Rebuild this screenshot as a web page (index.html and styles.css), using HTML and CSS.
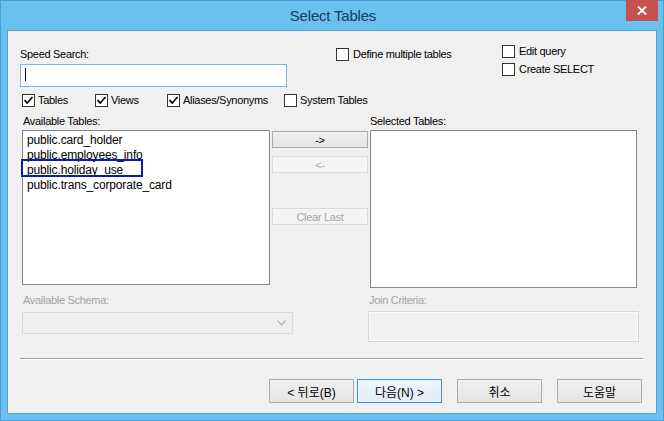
FILE: index.html
```html
<!DOCTYPE html>
<html>
<head>
<meta charset="utf-8">
<title>Select Tables</title>
<link rel="stylesheet" href="styles.css">
</head>
<body>
<div class="window">
  <div class="titlebar">
    <span class="title">Select Tables</span>
    <div class="close">
      <svg width="10" height="9" viewBox="0 0 10 9"><path d="M1 0.5 L9 8.5 M9 0.5 L1 8.5" stroke="#fff" stroke-width="1.8" fill="none"/></svg>
    </div>
  </div>
  <div class="client">
    <div class="top">
      <div class="search">
        <div class="label">Speed Search:</div>
        <div class="textbox"><span class="caret"></span></div>
      </div>
      <div class="define">
        <div class="check"><span class="box"></span><span>Define multiple tables</span></div>
      </div>
      <div class="opts">
        <div class="check"><span class="box"></span><span>Edit query</span></div>
        <div class="check"><span class="box"></span><span>Create SELECT</span></div>
      </div>
    </div>

    <div class="filters">
      <div class="check"><span class="box checked"><svg width="11" height="11" viewBox="0 0 11 11"><path d="M1.5 5.2 L4.2 8 L9.5 2" stroke="#000" stroke-width="1.7" fill="none"/></svg></span><span>Tables</span></div>
      <div class="check"><span class="box checked"><svg width="11" height="11" viewBox="0 0 11 11"><path d="M1.5 5.2 L4.2 8 L9.5 2" stroke="#000" stroke-width="1.7" fill="none"/></svg></span><span>Views</span></div>
      <div class="check"><span class="box checked"><svg width="11" height="11" viewBox="0 0 11 11"><path d="M1.5 5.2 L4.2 8 L9.5 2" stroke="#000" stroke-width="1.7" fill="none"/></svg></span><span>Aliases/Synonyms</span></div>
      <div class="check"><span class="box"></span><span>System Tables</span></div>
    </div>

    <div class="list-heads">
      <div class="label">Available Tables:</div>
      <div class="label">Selected Tables:</div>
    </div>

    <div class="lists">
      <div class="listbox avail">
        <div class="item">public.card_holder</div>
        <div class="item">public.employees_info</div>
        <div class="item">public.holiday_use</div>
        <div class="item">public.trans_corporate_card</div>
        <div class="focus-rect"></div>
      </div>
      <div class="movers">
        <div class="btn small">-&gt;</div>
        <div class="btn small disabled lt">&lt;-</div>
        <div class="btn small disabled clear">Clear Last</div>
      </div>
      <div class="listbox selected"></div>
    </div>

    <div class="lower">
      <div class="schema">
        <div class="label disabled">Available Schema:</div>
        <div class="combo">
          <svg width="9" height="6" viewBox="0 0 9 6"><path d="M0.5 0.5 L4.5 5 L8.5 0.5" stroke="#b4b4b4" stroke-width="1.3" fill="none"/></svg>
        </div>
      </div>
      <div class="join">
        <div class="label disabled">Join Criteria:</div>
        <div class="joinbox"></div>
      </div>
    </div>

    <div class="sep"></div>

    <div class="buttons">
      <div class="btn big">&lt; 뒤로(B)</div>
      <div class="btn big default">다음(N) &gt;</div>
      <div class="btn big cancel">취소</div>
      <div class="btn big help">도움말</div>
    </div>
  </div>
</div>
</body>
</html>
```

FILE: styles.css
```css
* { box-sizing: border-box; }
html, body { margin: 0; padding: 0; background: #6bc1ef; }
body {
  font-family: "Liberation Sans", Arial, "Noto Sans CJK KR", sans-serif;
  font-size: 11px;
  color: #000;
}
.window {
  position: relative;
  width: 664px;
  height: 421px;
  border: 1px solid #4b9ed4;
  background: #69c1ef;
  padding: 0 6px 6px 6px;
}
.titlebar {
  height: 29px;
  display: flex;
  align-items: center;
  justify-content: center;
}
.title {
  font-size: 15px;
  color: #1c3b57;
  letter-spacing: -0.2px;
  padding-left: 2px;
}
.close {
  position: absolute;
  top: -1px;
  right: 5px;
  width: 32px;
  height: 21px;
  background: #c75050;
  display: flex;
  align-items: center;
  justify-content: center;
}
.client {
  width: 650px;
  height: 384px;
  border: 1px solid #58a2d3;
  background: #f0f0f0;
}
.label {
  line-height: 13px;
  height: 13px;
  letter-spacing: -0.3px;
  white-space: nowrap;
}
.label.disabled { color: #a3a3a3; }

.top {
  display: grid;
  grid-template-columns: 314px 168px 1fr;
  padding-left: 12px;
}
.search .label { margin-top: 17px; }
.textbox {
  margin-top: 3px;
  width: 267px;
  height: 23px;
  border: 1px solid #7eb4ea;
  background: #fff;
  padding: 3px 0 0 4px;
}
.caret {
  display: block;
  width: 1px;
  height: 13px;
  background: #000;
}
.check {
  display: flex;
  align-items: center;
  height: 13px;
  line-height: 13px;
  white-space: nowrap;
  letter-spacing: -0.3px;
}
.box {
  width: 13px;
  height: 13px;
  border: 1px solid #333;
  background: #fff;
  margin-right: 4px;
  flex: none;
  display: flex;
  align-items: center;
  justify-content: center;
}
.define { padding-top: 17px; padding-left: 2px; }
.opts { padding-top: 14px; }
.opts .check + .check { margin-top: 5px; }

.filters {
  display: grid;
  grid-template-columns: 73px 72px 117px auto;
  padding-left: 14px;
  margin-top: 7px;
}
.filters .box { margin-right: 3px; }

.list-heads {
  display: grid;
  grid-template-columns: 347px auto;
  padding-left: 15px;
  margin-top: 8px;
}

.lists {
  display: flex;
  align-items: flex-start;
  padding-left: 14px;
  margin-top: 2px;
}
.listbox {
  border: 1px solid #828790;
  background: #fff;
}
.avail {
  position: relative;
  width: 248px;
  height: 155px;
  padding: 2px 0 0 4px;
  font-size: 12px;
  letter-spacing: -0.15px;
}
.item { height: 15px; line-height: 15px; white-space: nowrap; }
.focus-rect {
  position: absolute;
  left: -2px;
  top: 28px;
  width: 122px;
  height: 18px;
  border: 2px solid #101c9c;
}
.movers {
  width: 96px;
  margin-left: 2px;
  display: flex;
  flex-direction: column;
}
.selected {
  margin-left: 2px;
  width: 267px;
  height: 158px;
}

.btn {
  display: flex;
  align-items: center;
  justify-content: center;
  border: 1px solid #acacac;
  background: linear-gradient(#f0f0f0, #e5e5e5);
  white-space: nowrap;
}
.btn.small {
  height: 17px;
  margin-top: 1px;
  letter-spacing: -0.3px;
}
.btn.disabled {
  border-color: #d9d9d9;
  background: #f4f4f4;
  color: #a6a6a6;
}
.btn.lt { margin-top: 8px; }
.btn.clear { margin-top: 35px; }

.lower {
  display: grid;
  grid-template-columns: 346px 271px;
  padding-left: 14px;
  margin-top: 6px;
}
.lower .label { padding-left: 1px; }
.combo {
  margin-top: 5px;
  width: 271px;
  height: 22px;
  border: 1px solid #d9d9d9;
  background: #efefef;
  display: flex;
  align-items: center;
  justify-content: flex-end;
  padding-right: 6px;
}
.joinbox {
  margin-top: 4px;
  width: 271px;
  height: 31px;
  border: 1px solid #d7d7d7;
  box-shadow: inset 0 0 0 1px #fafafa;
  background: #f0f0f0;
}

.sep {
  margin: 16px 0 0 12px;
  width: 623px;
  height: 2px;
  border-top: 1px solid #a0a0a0;
  border-bottom: 1px solid #ffffff;
}

.buttons {
  display: flex;
  padding-left: 261px;
  margin-top: 19px;
}
.btn.big {
  width: 85px;
  height: 24px;
  font-size: 12px;
}
.btn.default {
  margin-left: 3px;
  border-color: #3c8fe0;
  background: linear-gradient(#eef5fc, #e2edf8);
}
.btn.cancel, .btn.help { margin-left: 15px; }
```
